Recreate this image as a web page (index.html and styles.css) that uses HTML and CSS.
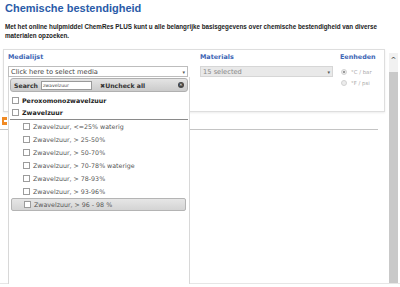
FILE: index.html
```html
<!DOCTYPE html>
<html lang="nl">
  <head>
    <meta charset="UTF-8" />
    <title>Chemische bestendigheid</title>
    <link rel="stylesheet" href="styles.css">
  </head>
  <body>
    <div class="wrap">
      <div class="page">
        <h1 class="titel">Chemische bestendigheid</h1>
        <p class="intro">Met het online hulpmiddel ChemRes PLUS kunt u alle belangrijke basisgegevens over chemische bestendigheid van diverse materialen opzoeken.</p>

        <div class="filters">
          <div class="veld media">
            <div class="label">Medialijst</div>
            <div class="select">Click here to select media<span class="pijl">▾</span></div>

            <!-- open multiselect -->
            <div class="dropdown">
              <div class="dd-kop">
                <span class="zoek-label">Search</span>
                <span class="zoek-input">zwavelzuur</span>
                <span class="uncheck">✖Uncheck all</span>
                <span class="sluit">✕</span>
              </div>
              <ul class="opties">
                <li class="groep"><span class="vink"></span>Peroxomonozwavelzuur</li>
                <li class="groep lijn"><span class="vink"></span>Zwavelzuur</li>
                <li class="optie"><span class="vink"></span>Zwavelzuur, &lt;=25% waterig</li>
                <li class="optie"><span class="vink"></span>Zwavelzuur, &gt; 25-50%</li>
                <li class="optie"><span class="vink"></span>Zwavelzuur, &gt; 50-70%</li>
                <li class="optie"><span class="vink"></span>Zwavelzuur, &gt; 70-78% waterige</li>
                <li class="optie"><span class="vink"></span>Zwavelzuur, &gt; 78-93%</li>
                <li class="optie"><span class="vink"></span>Zwavelzuur, &gt; 93-96%</li>
                <li class="optie actief"><span class="vink"></span>Zwavelzuur, &gt; 96 - 98 %</li>
              </ul>
            </div>
          </div>

          <div class="veld materials">
            <div class="label">Materials</div>
            <div class="select uit">15 selected<span class="pijl">▾</span></div>
          </div>

          <div class="veld eenheden">
            <div class="label">Eenheden</div>
            <div class="radio"><span class="dot aan"></span>°C / bar</div>
            <div class="radio"><span class="dot"></span>°F / psi</div>
          </div>
        </div>

        <div class="tabs"><span class="tab-icoon"></span></div>
      </div>

      <div class="scrollbar">
        <div class="omhoog">^</div>
        <div class="duim"></div>
      </div>
    </div>
  </body>
</html>
```

FILE: styles.css
```css
body {
  margin: 0;
  font-family: "DejaVu Sans", Verdana, sans-serif;
  color: #333;
  background: #fff;
  overflow: hidden;
}
.wrap {
  display: flex;
  height: 283px;
  border-bottom: 1px solid #e6e6e6;
}
.page {
  width: 389px;
  flex-shrink: 0;
}
.titel {
  margin: 2px 0 0 5px;
  font-family: "Liberation Sans", Arial, sans-serif;
  font-size: 11px;
  line-height: 13px;
  color: #2a5ba8;
}
.intro {
  margin: 7px 8px 0 5px;
  font-family: "Liberation Sans", Arial, sans-serif;
  font-size: 6.3px;
  font-weight: bold;
  line-height: 9px;
  color: #222;
}
.filters {
  display: flex;
  margin: 9px 0 0 3px;
  width: 376px;
  height: 58px;
  padding: 3px 0 0 4px;
  border: 1px solid #dedede;
  box-shadow: 0 1px 2px rgba(0, 0, 0, 0.08);
}
.veld {
  position: relative;
}
.label {
  font-size: 6.4px;
  font-weight: bold;
  line-height: 9px;
  color: #3b64b4;
  margin-bottom: 4px;
}
.media {
  width: 180px;
}
.materials {
  width: 133px;
  margin-left: 12px;
}
.eenheden {
  margin-left: 7px;
}
.select {
  display: flex;
  justify-content: space-between;
  align-items: center;
  height: 9px;
  padding: 0 2px 0 2px;
  border: 1px solid #bdbdbd;
  background: #fff;
  font-size: 6.7px;
  color: #444;
}
.select.uit {
  background: #e9e9e9;
  border-color: #d6d6d6;
  color: #888;
}
.pijl {
  font-size: 5px;
  color: #555;
}
.radio {
  display: flex;
  align-items: center;
  gap: 4px;
  height: 11px;
  margin-left: 1px;
  font-size: 5.4px;
  color: #aaa;
}
.dot {
  width: 4px;
  height: 4px;
  border-radius: 50%;
  border: 1px solid #d2d2d2;
  background: #ececec;
}
.dot.aan {
  background: radial-gradient(#9a9a9a 45%, #ececec 55%);
}
.tabs {
  position: relative;
  height: 17px;
  width: 378px;
  border-bottom: 1px solid #c4c4c4;
}
.tab-icoon {
  position: absolute;
  left: 2px;
  top: 5px;
  width: 5px;
  height: 8px;
  background: #f08a24;
}
.tab-icoon::after {
  content: "";
  position: absolute;
  left: 2px;
  top: 3px;
  width: 3px;
  height: 2px;
  background: #fff;
}

/* open dropdown ligt over de pagina */
.dropdown {
  position: absolute;
  left: 0;
  top: 24px;
  z-index: 2;
  width: 178px;
  height: 206px;
  padding: 1px 1px 0 1px;
  background: #fff;
  border: 1px solid #d8d8d8;
  border-top: none;
}
.dd-kop {
  display: flex;
  align-items: center;
  height: 12px;
  padding: 0 3px;
  border: 1px solid #b0b0b0;
  border-radius: 3px;
  background: linear-gradient(#e4e4e4, #cbcbcb);
  font-size: 6.2px;
  font-weight: bold;
  color: #333;
}
.zoek-input {
  margin-left: 3px;
  width: 48px;
  height: 7px;
  padding-left: 1px;
  border: 1px solid #9a9a9a;
  background: #fff;
  font-size: 4.6px;
  font-weight: normal;
  line-height: 7px;
  color: #444;
}
.uncheck {
  margin-left: 8px;
}
.sluit {
  margin-left: auto;
  width: 6px;
  height: 6px;
  border-radius: 50%;
  background: #444;
  color: #fff;
  font-size: 4px;
  line-height: 6px;
  text-align: center;
}
.opties {
  list-style: none;
  margin: 0;
  padding: 0;
}
.opties li {
  display: flex;
  align-items: center;
  gap: 3px;
  font-size: 6.3px;
  color: #555;
}
.groep {
  height: 12px;
  padding-left: 2px;
  font-weight: bold;
  color: #222 !important;
}
.groep:first-child {
  margin-top: 2px;
}
.groep.lijn {
  height: 13px;
  border-bottom: 1px solid #8a8a8a;
}
.optie {
  height: 13px;
  padding-left: 13px;
}
.optie.actief {
  height: 11px;
  margin-left: 1px;
  margin-right: 2px;
  padding-left: 12px;
  border: 1px solid #b4b4b4;
  border-radius: 2px;
  background: linear-gradient(#e6e6e6, #d4d4d4);
}
.vink {
  width: 5px;
  height: 5px;
  border: 1px solid #9c9c9c;
  background: #fff;
  flex-shrink: 0;
}
.scrollbar {
  width: 9px;
  margin-top: 53px;
  background: #f1f1f1;
  display: flex;
  flex-direction: column;
}
.omhoog {
  height: 19px;
  font-size: 7px;
  font-weight: bold;
  line-height: 14px;
  text-align: center;
  color: #555;
}
.duim {
  flex: 1;
  background: #c9c9c9;
}
```
